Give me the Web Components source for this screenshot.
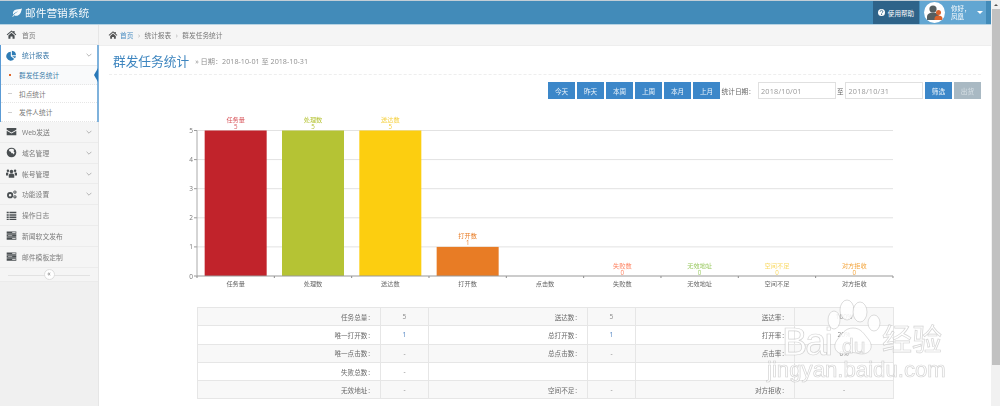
<!DOCTYPE html>
<html>
<head>
<meta charset="utf-8">
<style>
    html, body { margin: 0; height: 100%; overflow: hidden; background: #fff; }
    body { font-family: "Open Sans", "Noto Sans CJK SC", sans-serif; }
    /* the reference is a soft, upscaled capture */
    #page { display: flex; height: 406px; position: relative; filter: blur(.5px); }
    #app { width: 991px; display: flex; flex-direction: column; }
    #body { flex: 1; display: flex; min-height: 0; }
    #main { flex: 1; display: flex; flex-direction: column; min-width: 0; }
</style>
</head>
<body>
<div id="page">
    <div id="app">
        <app-header></app-header>
        <div id="body">
            <side-nav>
                <nav-item icon="home" label="首页" style="--row:19px"></nav-item>
                <nav-item icon="pie" label="统计报表" arrow active style="--row:20px">
                    <sub-item current>群发任务统计</sub-item>
                    <sub-item>扣点统计</sub-item>
                    <sub-item>发件人统计</sub-item>
                </nav-item>
                <nav-item icon="mail" label="Web发送" arrow></nav-item>
                <nav-item icon="globe" label="域名管理" arrow></nav-item>
                <nav-item icon="users" label="帐号管理" arrow></nav-item>
                <nav-item icon="cogs" label="功能设置" arrow></nav-item>
                <nav-item icon="list" label="操作日志"></nav-item>
                <nav-item icon="server" label="新闻软文发布"></nav-item>
                <nav-item icon="server" label="邮件模板定制"></nav-item>
            </side-nav>
            <div id="main">
                <bread-crumb></bread-crumb>
                <page-title></page-title>
                <filter-bar></filter-bar>
                <bar-chart></bar-chart>
                <stat-table></stat-table>
            </div>
        </div>
    </div>
    <fake-scrollbar></fake-scrollbar>
    <baidu-mark></baidu-mark>
</div>

<script>
const ICONS = {
    home: '<path d="M8 2 1 8l1 1 6-5 6 5 1-1-2.5-2.2V3h-2v1.1z"/><path d="M3.5 9.5 8 5.6l4.500 3.900V14H9.500v-3h-3v3h-3z"/>',
    pie: '<path d="M7 2.500V9l5 4a6.500 6.500 0 1 1-5-10.500z"/><path d="M8.500 1a6.500 6.500 0 0 1 6 6.500H8.500z"/><path d="M9 9h5.500a6.500 6.500 0 0 1-1.500 3z"/>',
    mail: '<path d="M1 3h14v2.500L8 9.500 1 5.500z"/><path d="M1 7l7 4 7-4v6.500H1z"/>',
    globe: '<path fill-rule="evenodd" d="M8 1a7 7 0 1 1 0 14A7 7 0 0 1 8 1zM4 4l1 2 2 1 1 2 2 0 1 2 1.500-2.500L11 6l1-2-3-1.500L6 3z"/>',
    users: '<circle cx="8" cy="5" r="2.600"/><circle cx="2.800" cy="4" r="1.800"/><circle cx="13.200" cy="4" r="1.800"/><path d="M4 14V10.500C4 8.800 5.500 8 8 8s4 .8 4 2.500V14z"/><path d="M0 10V7.500C0 6.500 1.200 6.200 3.500 6.500L3 11H0zM16 10V7.500c0-1-1.200-1.300-3.500-1L13 11h3z"/>',
    cogs: '<path fill-rule="evenodd" d="M6 4.500a4.500 4.500 0 1 1 0 9 4.500 4.500 0 0 1 0-9zm0 2.600a1.900 1.900 0 1 0 0 3.800 1.900 1.900 0 0 0 0-3.800z"/><path fill-rule="evenodd" d="M13 2a2.400 2.400 0 1 1 0 4.800A2.400 2.400 0 0 1 13 2zm0 1.400a1 1 0 1 0 0 2 1 1 0 0 0 0-2zM13 9a2.400 2.400 0 1 1 0 4.800A2.400 2.400 0 0 1 13 9zm0 1.400a1 1 0 1 0 0 2 1 1 0 0 0 0-2z"/>',
    list: '<path d="M1 2.500h3v2.400H1zM5 2.500h10v2.400H5zM1 6h3v2.400H1zM5 6h10v2.400H5zM1 9.500h3v2.400H1zM5 9.500h10v2.400H5zM1 13h3v1.500H1zM5 13h10v1.500H5z"/>',
    server: '<path d="M1 2h14v3.400H1zM1 6.300h14v3.400H1zM1 10.600h14V14H1z"/><path fill="#f5f5f5" d="M9 3h5v1H9zM3 7.500h6v1H3zM9 11.800h5v1H9z"/>'
};

const icon = (name, size, color) =>
    `<svg width="${size}" height="${size}" viewBox="0 0 16 16" fill="${color}">${ICONS[name]}</svg>`;

class AppHeader extends HTMLElement {
    constructor() {
        super();
        this.attachShadow({ mode: 'open' });
        this.shadowRoot.innerHTML = `
        <style>
            :host { display: flex; height: 23px; background: #428bb9; color: #fff; flex: none;
                    border-top: 1px solid #c3ced6; border-bottom: 1px solid #b7d3e3; align-items: stretch; }
            #brand { display: flex; align-items: center; gap: 3px; padding-left: 12px; font-size: 10.700px; flex: 1; opacity: .95; }
            #help { width: 46px; background: #2e6389; display: flex; align-items: center; justify-content: center; gap: 3px; font-size: 6.600px; }
            #user { width: 66px; margin-left: 1px; background: #62a6d2; display: flex; align-items: center; font-size: 6.500px; box-sizing: border-box; padding-left: 4px; }
            #end { width: 5px; background: #428bb9; }
            #avatar { width: 21px; height: 21px; border-radius: 50%; background: #fff; }
            #hello { margin-left: 6px; line-height: 8px; width: 25px; }
            #caret { border: 3px solid transparent; border-top-color: #fff; border-bottom: 0; margin-left: 1px; }
        </style>
        <div id="brand">
            <svg width="10" height="9" viewBox="0 0 16 14" fill="#fff"><path d="M16 .5C12 2 8 1 4.500 3 1.500 4.800 1 8 2 10 4 7.500 7 6 10 5.500 7 7 3.500 9 .5 13.500l1 .5 2-2.500c3 1.500 7 1 9-2C14.500 7 15 4 16 .5z"/></svg>
            <span>邮件营销系统</span>
        </div>
        <div id="help">
            <svg width="7" height="7" viewBox="0 0 16 16"><circle cx="8" cy="8" r="8" fill="#fff"/><path d="M5 6a3 3 0 1 1 4.500 2.600C8.500 9.200 8.300 9.500 8.300 10.500" fill="none" stroke="#2e6389" stroke-width="2"/><rect x="7.200" y="11.500" width="2.200" height="2.200" fill="#2e6389"/></svg>
            <span>使用帮助</span>
        </div>
        <div id="user">
            <svg id="avatar" viewBox="0 0 21 21">
                <circle cx="9" cy="7" r="3.600" fill="#555e60"/><path d="M3 18v-3c0-3 2.500-4.500 6-4.500s6 1.500 6 4.500v3z" fill="#555e60"/>
                <circle cx="14.500" cy="10.500" r="2.500" fill="#d9622b"/><path d="M10.500 18v-1.500c0-2 1.800-3 4-3s4 1 4 3V18z" fill="#d9622b"/>
            </svg>
            <div id="hello">你好，<br>凤凰</div>
            <div id="caret"></div>
        </div>
        <div id="end"></div>
        `;
    }
}
customElements.define('app-header', AppHeader);

class SideNav extends HTMLElement {
    constructor() {
        super();
        this.attachShadow({ mode: 'open' });
        this.shadowRoot.innerHTML = `
        <style>
            :host { display: block; width: 98px; flex: none; border-right: 1px solid #e6e6e6; background: #f0f0f0; }
            #foot { height: 13px; background: #f5f5f5; border-bottom: 1px solid #ebebeb; display: flex; align-items: center; justify-content: center; position: relative; }
            #foot::before { content: ""; position: absolute; left: 8px; right: 8px; top: 7px; height: 1px; background: #e2e2e2; }
            #btn { position: relative; width: 9px; height: 9px; border-radius: 50%; background: #fff; border: 1px solid #ddd; font-size: 7px; line-height: 8px; text-align: center; color: #777; }
        </style>
        <slot></slot>
        <div id="foot"><div id="btn">«</div></div>
        `;
    }
}
customElements.define('side-nav', SideNav);

class NavItem extends HTMLElement {
    constructor() {
        super();
        this.attachShadow({ mode: 'open' });
    }
    connectedCallback() {
        const active = this.hasAttribute('active');
        const iconColor = active ? '#2f7cb5' : '#4a4f52';
        this.shadowRoot.innerHTML = `
        <style>
            :host { display: block; font-size: 6.800px; color: #7a7a7a; }
            :host([active]) { border-left: 1px solid #5b9bd5; border-right: 2px solid #7fb2dc; margin-right: -1px; color: #3a78a8; }
            #row { height: var(--row, 19.800px); display: flex; align-items: center; background: #f5f5f5; border-bottom: 1px solid #ececec; padding-left: 6px; }
            :host([active]) #row { background: #fff; padding-left: 5px; }
            #icon { width: 11px; height: 11px; margin-right: 5px; display: flex; flex: none; }
            #label { flex: 1; white-space: nowrap; }
            #arrow { width: 6px; height: 4px; margin-right: 6px; flex: none; }
            :host([active]) #arrow { margin-right: 5px; }
        </style>
        <div id="row">
            <span id="icon">${icon(this.getAttribute('icon'), 11, iconColor)}</span>
            <span id="label">${this.getAttribute('label')}</span>
            ${this.hasAttribute('arrow') ? '<svg id="arrow" viewBox="0 0 10 6"><path d="M1 1l4 4 4-4" fill="none" stroke="#9a9a9a" stroke-width="1.200"/></svg>' : ''}
        </div>
        <slot></slot>
        `;
    }
}
customElements.define('nav-item', NavItem);

class SubItem extends HTMLElement {
    constructor() {
        super();
        this.attachShadow({ mode: 'open' });
        this.shadowRoot.innerHTML = `
        <style>
            :host { display: flex; align-items: center; height: 17.700px; padding-left: 7px; font-size: 6.700px; color: #777; border-bottom: 1px dotted #e6e6e6; position: relative; background: #fff; }
            :host([current]) { background: #f9fafb; color: #3d7eaa; }
            #dot { width: 4px; height: 1px; margin-right: 7px; background: #cfcfcf; flex: none; }
            :host([current]) #dot { width: 2px; height: 2px; background: #e0662a; margin-left: 1px; margin-right: 8px; }
            #tip { display: none; position: absolute; right: -1px; top: 1.500px; border-style: solid; border-color: transparent; border-width: 7.500px 4px 7.500px 0; border-right-color: #2a78b8; }
            :host([current]) #tip { display: block; }
        </style>
        <span id="dot"></span><slot></slot><span id="tip"></span>
        `;
    }
}
customElements.define('sub-item', SubItem);

class BreadCrumb extends HTMLElement {
    constructor() {
        super();
        this.attachShadow({ mode: 'open' });
        this.shadowRoot.innerHTML = `
        <style>
            :host { display: flex; align-items: center; height: 20px; flex: none; background: #f5f5f5; border-bottom: 1px solid #eee; padding-left: 9px; font-size: 6.700px; color: #777; gap: 4.500px; }
            a { color: #4a8ec2; }
            svg { margin-right: -2.500px; }
            i { font-style: normal; color: #aaa; font-size: 7px; }
        </style>
        ${icon('home', 10, '#555')}
        <a>首页</a><i>›</i><span>统计报表</span><i>›</i><span>群发任务统计</span>
        `;
    }
}
customElements.define('bread-crumb', BreadCrumb);

class PageTitle extends HTMLElement {
    constructor() {
        super();
        this.attachShadow({ mode: 'open' });
        this.shadowRoot.innerHTML = `
        <style>
            :host { display: flex; align-items: center; height: 28px; flex: none; margin: 0 10px; border-bottom: 1px dashed #eee; padding-left: 4px; }
            h1 { margin: 0; font-size: 12.700px; font-weight: 400; color: #3d85bf; }
            small { font-size: 7.200px; color: #909090; margin-left: 6px; margin-top: 1px; }
        </style>
        <h1>群发任务统计</h1><small>» 日期：2018-10-01 至 2018-10-31</small>
        `;
    }
}
customElements.define('page-title', PageTitle);

class FilterBar extends HTMLElement {
    constructor() {
        super();
        this.attachShadow({ mode: 'open' });
        const btns = ['今天', '昨天', '本周', '上周', '本月', '上月'].map(t => `<button>${t}</button>`).join('');
        this.shadowRoot.innerHTML = `
        <style>
            :host { display: flex; justify-content: flex-end; align-items: stretch; height: 17px; flex: none; margin: 7px 10px 0 0; font-size: 6.700px; color: #666; }
            #quick { display: flex; gap: 2px; }
            button { width: 27px; padding: 0; border: 0; background: #3c87c9; color: #e8f2fa; font: inherit; }
            span { display: flex; align-items: center; }
            .field { box-sizing: border-box; width: 78px; border: 1px solid #e0e0e0; padding-left: 2.500px; color: #999; font-size: 7.300px; letter-spacing: .2px; }
            #go { margin-left: 2px; }
            #out { margin-left: 2px; background: #a9b9c3; color: #d8e0e5; }
        </style>
        <div id="quick">${btns}</div>
        <span style="margin:0 2.500px 0 1.500px">统计日期：</span>
        <span class="field">2018/10/01</span>
        <span style="margin:0 1.500px;font-size:6.500px">至</span>
        <span class="field">2018/10/31</span>
        <button id="go">筛选</button>
        <button id="out">出货</button>
        `;
    }
}
customElements.define('filter-bar', FilterBar);

class BarChart extends HTMLElement {
    constructor() {
        super();
        this.attachShadow({ mode: 'open' });
        const data = [
            ['任务量', 5, '#c1232b', '#d9565c'],
            ['处理数', 5, '#b5c334', '#b5c334'],
            ['送达数', 5, '#fcce10', '#f5cf3a'],
            ['打开数', 1, '#e87c25', '#e87c25'],
            ['点击数', null, '#27727b', '#27727b'],
            ['失败数', 0, '#fe8463', '#fe8463'],
            ['无效地址', 0, '#9bca63', '#9bca63'],
            ['空间不足', 0, '#fad860', '#fad860'],
            ['对方拒收', 0, '#f3a43b', '#f3a43b']
        ];
        // chart area in px, relative to this element (which starts at x=160, y=110)
        const left = 37, step = 77.33, top = 20.5, unit = 29.1, base = 166;
        let s = '';
        for (let i = 0; i <= 5; i++) {
            const y = base - i * unit;
            if (i > 0) s += `<line x1="${left}" x2="733" y1="${y}" y2="${y}" stroke="#e2e2e2"/>`;
            s += `<line x1="${left - 3}" x2="${left}" y1="${y}" y2="${y}" stroke="#999"/>`;
            s += `<text x="${left - 4}" y="${y + 2.500}" text-anchor="end" fill="#777" font-size="6.500">${i}</text>`;
        }
        data.forEach(([name, v, color, tint], i) => {
            const cx = left + step * (i + .5);
            if (v) s += `<rect x="${cx - 31}" y="${base - v * unit}" width="62" height="${v * unit}" fill="${color}"/>`;
            if (v !== null) {
                const y = base - v * unit;
                s += `<text x="${cx}" y="${y - 8.500}" text-anchor="middle" fill="${tint}">${name}</text>`;
                s += `<text x="${cx}" y="${y - 1.500}" text-anchor="middle" fill="${tint}">${v}</text>`;
            }
            s += `<text x="${cx}" y="${base + 9.500}" text-anchor="middle" fill="#666">${name}</text>`;
            s += `<line x1="${left + step * i}" x2="${left + step * i}" y1="${base}" y2="${base + 2}" stroke="#888"/>`;
        });
        s += `<line x1="${left + step * 9}" x2="${left + step * 9}" y1="${base}" y2="${base + 2}" stroke="#888"/>`;
        s += `<line x1="${left}" x2="${left}" y1="${top}" y2="${base}" stroke="#aaa"/>`;
        s += `<line x1="${left}" x2="733" y1="${base}" y2="${base}" stroke="#999"/>`;
        this.shadowRoot.innerHTML = `
        <style>
            :host { display: block; height: 190px; flex: none; margin: 11px 0 0 61px; }
            svg { display: block; font-size: 6.200px; }
        </style>
        <svg width="740" height="190">${s}</svg>
        `;
    }
}
customElements.define('bar-chart', BarChart);

class StatTable extends HTMLElement {
    constructor() {
        super();
        this.attachShadow({ mode: 'open' });
        const rows = [
            ['任务总量：', '5', '送达数：', '5', '送达率：', '100%'],
            ['唯一打开数：', '1', '总打开数：', '1', '打开率：', '20%'],
            ['唯一点击数：', '-', '总点击数：', '-', '点击率：', '0%'],
            ['失败总数：', '-', '', '', '', ''],
            ['无效地址：', '-', '空间不足：', '-', '对方拒收：', '-']
        ];
        const body = rows.map((r, n) => `<tr>${r.map((c, i) =>
            `<td class="${i % 2 ? 'val' : 'key'}${n === 1 && i < 4 && i % 2 ? ' link' : ''}">${c}</td>`).join('')}</tr>`).join('');
        this.shadowRoot.innerHTML = `
        <style>
            :host { display: block; flex: none; margin: 7px 0 0 98px; width: 696px; font-size: 6.600px; color: #6a6a6a; }
            table { width: 100%; border-collapse: collapse; table-layout: fixed; }
            td { height: 18.300px; padding: 0; border: 1px solid #e6e6e6; box-sizing: border-box; }
            tr:nth-child(odd) td { background: #f8f8f8; }
            .key { text-align: right; padding-right: 6px; }
            .val { text-align: center; color: #888; }
            .link { color: #4a7fc0; }
        </style>
        <table>
            <colgroup><col style="width:183px"><col style="width:48px"><col style="width:159px"><col style="width:48px"><col style="width:159px"><col style="width:99px"></colgroup>
            ${body}
        </table>
        `;
    }
}
customElements.define('stat-table', StatTable);

class FakeScrollbar extends HTMLElement {
    constructor() {
        super();
        this.attachShadow({ mode: 'open' });
        this.shadowRoot.innerHTML = `
        <style>
            :host { display: flex; flex-direction: column; width: 9px; flex: none; background: #f1f1f1; }
            #up { height: 9px; display: flex; align-items: center; justify-content: center; flex: none; }
            #up i { border: 2px solid transparent; border-bottom-color: #555; border-top: 0; }
            #thumb { height: 356px; margin-left: 1px; background: #c1c1c1; flex: none; }
        </style>
        <div id="up"><i></i></div><div id="thumb"></div>
        `;
    }
}
customElements.define('fake-scrollbar', FakeScrollbar);

class BaiduMark extends HTMLElement {
    constructor() {
        super();
        this.attachShadow({ mode: 'open' });
        this.shadowRoot.innerHTML = `
        <style>
            :host { display: block; position: absolute; left: 760px; top: 295px; width: 200px; height: 95px; pointer-events: none;
                    font-family: "Liberation Sans", "Noto Sans CJK SC", sans-serif; color: rgba(255,255,255,.85); -webkit-text-stroke: .7px rgba(170,170,170,.5); }
            svg { position: absolute; left: 0; top: 0; }
            span { position: absolute; white-space: nowrap; line-height: 1; }
            #bai { left: 22px; top: 28px; font-size: 38px; letter-spacing: -2px; }
            #du { left: 82px; top: 40px; font-size: 21px; }
            #jy { left: 122px; top: 30px; font-size: 30px; }
            #url { left: 7px; top: 64px; font-size: 22.200px; }
        </style>
        <svg width="200" height="70" fill="rgba(255,255,255,.85)" stroke="rgba(170,170,170,.5)" stroke-width=".8">
            <ellipse cx="74" cy="25" rx="6" ry="9"/>
            <ellipse cx="87" cy="15" rx="7" ry="10"/>
            <ellipse cx="100" cy="17" rx="7" ry="10"/>
            <ellipse cx="114" cy="28" rx="6" ry="8"/>
            <path d="M93 33c8 0 11 6 16 12 5 7 1 14-7 14-4 0-6-1.500-9-1.500S88 59 84 59c-8 0-12-7-7-14 5-6 8-12 16-12z"/>
        </svg>
        <span id="bai">Bai</span><span id="du">du</span><span id="jy">经验</span><span id="url">jingyan.baidu.com</span>
        `;
    }
}
customElements.define('baidu-mark', BaiduMark);
</script>
</body>
</html>
